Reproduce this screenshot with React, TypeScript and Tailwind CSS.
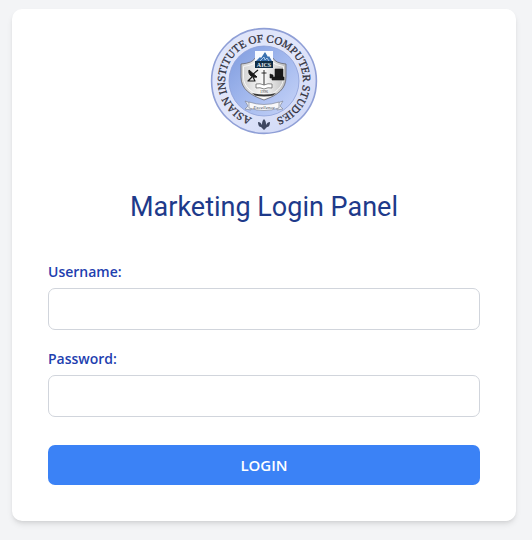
import React from "react";

function Seal() {
  return (
    <svg viewBox="0 0 108 108" className="size-[108px]" role="img" aria-label="Asian Institute of Computer Studies">
      <defs>
        <linearGradient id="disc" x1="0" y1="0" x2="1" y2="1">
          <stop offset="0" stopColor="#7f9bde" />
          <stop offset="0.5" stopColor="#a3b9ee" />
          <stop offset="1" stopColor="#c9d5f8" />
        </linearGradient>
        <linearGradient id="ring" x1="0" y1="0" x2="1" y2="1">
          <stop offset="0" stopColor="#dfe5fa" />
          <stop offset="0.5" stopColor="#e0e5fa" />
          <stop offset="1" stopColor="#cdd6f6" />
        </linearGradient>
        <linearGradient id="shield" x1="0" y1="0" x2="1" y2="0">
          <stop offset="0" stopColor="#cfcfcf" />
          <stop offset="0.5" stopColor="#fafafa" />
          <stop offset="1" stopColor="#bdbdbd" />
        </linearGradient>
        <path id="legend" d="M54 93A39 39 0 0 1 54 15A39 39 0 0 1 54 93" />
      </defs>
      <circle cx="54" cy="54" r="52.4" fill="url(#ring)" stroke="#8f9fd6" strokeWidth="1.6" />
      <circle cx="54" cy="54" r="35" fill="url(#disc)" stroke="#8da0d8" strokeWidth="0.8" />
      <text fontFamily="'Liberation Serif', serif" fontSize="11" fill="#30303c" stroke="#30303c" strokeWidth="0.3" textAnchor="middle">
        <textPath href="#legend" startOffset="50%">ASIAN INSTITUTE OF COMPUTER STUDIES</textPath>
      </text>
      <path d="M54 103l-3-3c-2 0-3-2-3-5c2 0 3 1 4 3c0-2 0-4 2-6c2 2 2 4 2 6c1-2 2-3 4-3c0 3-1 5-3 5z" fill="#3f4862" />
      <path d="M31 37Q43 36 45 31H63Q65 36 76 37V50C76 62 68 68 54 73C40 68 31 62 31 50Z" fill="url(#shield)" stroke="#65656d" strokeWidth="0.8" />
      <path d="M33.500 39.500Q43 38 46 35H62Q65 38 73.500 39.500V50C73.500 60 66 66 54 70.500C42 66 33.500 60 33.500 50Z" fill="none" stroke="#ffffff" strokeWidth="0.8" />
      <rect x="45" y="24" width="18" height="17" fill="#f8faff" />
      <path d="M46 34l4-4l1 1l4-6l3 5l1-1l3 5z" fill="#3970af" />
      <path d="M50 34l4-4l1 3l2-2l2 3" fill="none" stroke="#c8dcf5" strokeWidth="0.8" />
      <rect x="45" y="34" width="18" height="7" fill="#102d45" />
      <text x="54" y="39.800" textAnchor="middle" fontFamily="'Liberation Serif', serif" fontWeight="700" fontSize="6" fill="#e7edf3">AICS</text>
      <g fill="#191919" stroke="#191919" strokeLinejoin="round">
        <path d="M39 43c-1 5 3 8 8 7z" />
        <path d="M42 48l6-5M42 50l-4 4h7l-2-4" fill="none" strokeWidth="1.2" />
        <path d="M65 42h8v8h-8zM62 50h12v3H62z" strokeWidth="0.6" />
        <path d="M60 47l3 1v3h-3z" strokeWidth="0.6" />
        <path d="M54 43v15M51.500 46h5" fill="none" strokeWidth="0.9" />
      </g>
      <path d="M46 57q4-1 8 1q4-2 8-1v4q-4-1-8 1q-4-2-8-1z" fill="#fff" stroke="#555" strokeWidth="0.7" />
      <text x="54" y="65.500" textAnchor="middle" fontFamily="'Liberation Serif', serif" fontSize="4" fill="#333">1996</text>
      <path d="M42 66q12 3 24 0l-3 2.500q-9 2-18 0z" fill="#383838" />
      <path d="M35 74l6 2v7l-6-1l3-3zM73 74l-6 2v7l6-1l-3-3z" fill="#e5e8f0" stroke="#777d8e" strokeWidth="0.6" />
      <path d="M39 75q15 5 30 0v6q-15 5-30 0z" fill="#f8f8fa" stroke="#777d8e" strokeWidth="0.6" />
      <text x="54" y="81.500" textAnchor="middle" fontFamily="'Liberation Serif', serif" fontStyle="italic" fontSize="5" fill="#4b4f5c">Excellence</text>
    </svg>
  );
}

function Field({ id, label, type }: { id: string; label: string; type: string }) {
  return (
    <div>
      <label htmlFor={id} className="block text-sm leading-6 font-semibold text-[#1e40af]">
        {label}
      </label>
      <input
        id={id}
        name={id}
        type={type}
        className="mt-1 block h-[42px] w-full rounded-[7px] border border-gray-300 bg-white px-3 outline-none focus:border-blue-500"
      />
    </div>
  );
}

export default function App() {
  return (
    <main className="min-h-screen bg-gray-100 pt-[9px] pr-4 pb-4 pl-3 font-['Open_Sans','Noto_Sans',sans-serif]">
      <form className="rounded-[10px] bg-white px-9 pt-[18px] pb-9 shadow-md" onSubmit={(e) => e.preventDefault()}>
        <div className="flex justify-center">
          <Seal />
        </div>
        <h1 className="mt-[54px] text-center font-[Roboto,sans-serif] text-[27px] leading-9 font-normal text-[#1e3a8a]">
          Marketing Login Panel
        </h1>
        <div className="mt-[35px] flex flex-col gap-[17px]">
          <Field id="username" label="Username:" type="text" />
          <Field id="password" label="Password:" type="password" />
        </div>
        <button
          type="submit"
          className="mt-7 h-10 w-full rounded-[7px] bg-[#3b82f6] text-[15px] leading-6 font-semibold text-white"
        >
          LOGIN
        </button>
      </form>
    </main>
  );
}
